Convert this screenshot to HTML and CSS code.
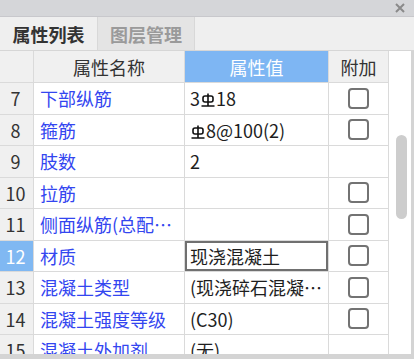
FILE: index.html
```html
<!DOCTYPE html>
<html lang="zh-CN">
<head>
    <meta charset="UTF-8">
    <title>属性列表</title>
    <link rel="stylesheet" href="styles.css">
</head>
<body>
    <div class="panel">
        <div class="titlebar">
            <svg class="close" width="10" height="10" viewBox="0 0 10 10">
                <path d="M1 1 L9 9 M9 1 L1 9" stroke="#8a8a8a" stroke-width="2"/>
            </svg>
        </div>
        <div class="tabs">
            <div class="tab active">属性列表</div>
            <div class="tab">图层管理</div>
        </div>
        <div class="content">
            <div class="grid">
                <div class="cell head"></div>
                <div class="cell head">属性名称</div>
                <div class="cell head sel">属性值</div>
                <div class="cell head">附加</div>

                <div class="cell num">7</div>
                <div class="cell name">下部纵筋</div>
                <div class="cell val">3<svg class="bar" width="14" height="14" viewBox="0 0 14 14"><rect x="2" y="3" width="10" height="6" rx="2"/><path d="M7 0.5 V13 M0.5 13 H13.5"/></svg>18</div>
                <div class="cell chk"><span class="box"></span></div>

                <div class="cell num">8</div>
                <div class="cell name">箍筋</div>
                <div class="cell val"><svg class="bar" width="14" height="14" viewBox="0 0 14 14"><rect x="2" y="3" width="10" height="6" rx="2"/><path d="M7 0.5 V13 M0.5 13 H13.5"/></svg>8@100(2)</div>
                <div class="cell chk"><span class="box"></span></div>

                <div class="cell num">9</div>
                <div class="cell name">肢数</div>
                <div class="cell val">2</div>
                <div class="cell chk"></div>

                <div class="cell num">10</div>
                <div class="cell name">拉筋</div>
                <div class="cell val"></div>
                <div class="cell chk"><span class="box"></span></div>

                <div class="cell num">11</div>
                <div class="cell name">侧面纵筋(总配筋值)</div>
                <div class="cell val"></div>
                <div class="cell chk"><span class="box"></span></div>

                <div class="cell num sel">12</div>
                <div class="cell name">材质</div>
                <div class="cell val editing">现浇混凝土</div>
                <div class="cell chk"><span class="box"></span></div>

                <div class="cell num">13</div>
                <div class="cell name">混凝土类型</div>
                <div class="cell val">(现浇碎石混凝土)</div>
                <div class="cell chk"><span class="box"></span></div>

                <div class="cell num">14</div>
                <div class="cell name">混凝土强度等级</div>
                <div class="cell val">(C30)</div>
                <div class="cell chk"><span class="box"></span></div>

                <div class="cell num">15</div>
                <div class="cell name">混凝土外加剂</div>
                <div class="cell val">(无)</div>
                <div class="cell chk"></div>
            </div>
            <div class="scroll">
                <div class="thumb"></div>
            </div>
        </div>
    </div>
</body>
</html>
```

FILE: styles.css
```css
body {
    margin: 0;
    font-family: "Noto Sans CJK SC", "Noto Sans", sans-serif;
    background: #fff;
}

.panel {
    width: 414px;
    height: 359px;
    display: flex;
    flex-direction: column;
    overflow: hidden;
}

.titlebar {
    height: 16px;
    background: #d5d6d9;
    border-bottom: 1px solid #c8c8cc;
    display: flex;
    justify-content: flex-end;
    align-items: center;
    padding-right: 9px;
}

.tabs {
    height: 33px;
    background: #efefef;
    border-bottom: 1px solid #d6d6d6;
    display: flex;
}

.tab {
    width: 96px;
    display: flex;
    align-items: center;
    justify-content: center;
    font-size: 18px;
    font-weight: bold;
    color: #9a9a9a;
    background: #e4e4e4;
    border-right: 1px solid #d8d8d8;
}

.tab.active {
    width: 97px;
    color: #333;
    background: #efefef;
}

.content {
    flex: 1;
    display: flex;
    overflow: hidden;
    border-right: 3px solid #d4d4d4;
    border-bottom: 5px solid #d4d4d4;
}

.grid {
    display: grid;
    grid-template-columns: 33px 150px 143px 59px;
    grid-template-rows: 31px;
    grid-auto-rows: 30.5px;
    gap: 1px;
    background: #dadada;
    border-right: 1px solid #dadada;
    align-content: start;
}

.cell {
    background: #fff;
    font-size: 18px;
    color: #1e1e1e;
    display: flex;
    align-items: center;
    white-space: nowrap;
    overflow: hidden;
    min-width: 0;
}

.head {
    background: #f0f0f0;
    justify-content: center;
    color: #333;
}

.head.sel {
    background: #7eb6f3;
    color: #fff;
}

.num {
    background: #f0f0f0;
    justify-content: center;
    color: #333;
    padding-right: 2px;
}

.num.sel {
    background: #80b8f2;
    color: #fff;
}

.name {
    color: #3346f0;
    padding-left: 6px;
    display: block;
    line-height: 30.5px;
    text-overflow: ellipsis;
}

.val {
    padding-left: 5px;
}

.val.editing {
    box-shadow: inset 0 0 0 2px #707070;
}

.val:nth-child(4n+3) {
    display: block;
    line-height: 30.5px;
    text-overflow: ellipsis;
    padding-right: 0;
}

.bar {
    vertical-align: -1px;
    margin: 0 1px;
    fill: none;
    stroke: #111;
    stroke-width: 1.6;
}

.chk {
    justify-content: center;
}

.box {
    width: 17px;
    height: 17px;
    border: 2px solid #737373;
    border-radius: 4px;
}

.scroll {
    flex: 1;
    background: #fff;
    position: relative;
}

.thumb {
    position: absolute;
    left: 7px;
    top: 84px;
    width: 11px;
    height: 84px;
    border-radius: 6px;
    background: #cdcdcd;
}
```
